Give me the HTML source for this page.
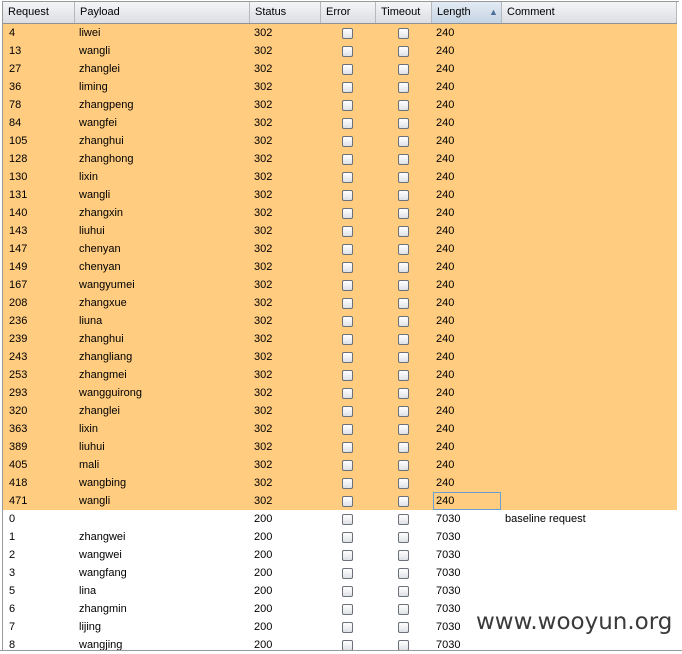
<!DOCTYPE html>
<html><head><meta charset="utf-8"><style>
body{margin:0;width:682px;height:653px;overflow:hidden;background:#fff;font-family:"Liberation Sans",sans-serif;font-size:11px;color:#000;position:relative}
.wrap{position:absolute;left:2px;top:1px;width:676px;height:648px;border-left:1px solid #999;border-top:1px solid #999;border-bottom:1px solid #999;overflow:hidden}
.hdr{position:absolute;left:0;top:0;width:674px;height:21px;background:linear-gradient(#f4f5f7,#dcdee3);border-bottom:1px solid #8e9196}
.h{position:absolute;top:0;height:21px;line-height:21px;padding-left:5px;border-right:1px solid #b5b8bd;box-sizing:border-box}
.h.sel{background:linear-gradient(#e3ebf4,#c6d4e3)}
.cb{position:absolute;top:4px;width:9px;height:9px;border:1px solid #6b7079;border-radius:2px;background:linear-gradient(#fff,#dfe2e6)}
.wm{position:absolute;left:476px;top:609px;font-size:23px;color:#3a3a3a;font-family:"DejaVu Sans","Liberation Sans",sans-serif}
.focus{position:absolute;left:430px;width:66px;height:16px;border:1px solid #6a9fd4;top:0}
.o{background:#ffcc80}
.r{position:relative;height:18px;line-height:18px}.r span{position:absolute;top:0}.a{left:6px}.b{left:76px}.s{left:251px}.l{left:433px}.m{left:502px}
</style></head><body>
<div class="wrap">
<div class="hdr">
<div class="h" style="left:0;width:72px">Request</div>
<div class="h" style="left:72px;width:175px">Payload</div>
<div class="h" style="left:247px;width:71px">Status</div>
<div class="h" style="left:318px;width:55px">Error</div>
<div class="h" style="left:373px;width:56px">Timeout</div>
<div class="h sel" style="left:429px;width:70px">Length<span style="position:absolute;left:57px;top:0;font-size:9px;color:#4a6f9c">▲</span></div>
<div class="h" style="left:499px;width:175px">Comment</div>
</div>
</div>
<div style="position:absolute;left:3px;top:24px;width:674px">
<div class="r o"><span class="a">4</span><span class="b">liwei</span><span class="s">302</span><i class="cb" style="left:339px"></i><i class="cb" style="left:395px"></i><span class="l">240</span></div>
<div class="r o"><span class="a">13</span><span class="b">wangli</span><span class="s">302</span><i class="cb" style="left:339px"></i><i class="cb" style="left:395px"></i><span class="l">240</span></div>
<div class="r o"><span class="a">27</span><span class="b">zhanglei</span><span class="s">302</span><i class="cb" style="left:339px"></i><i class="cb" style="left:395px"></i><span class="l">240</span></div>
<div class="r o"><span class="a">36</span><span class="b">liming</span><span class="s">302</span><i class="cb" style="left:339px"></i><i class="cb" style="left:395px"></i><span class="l">240</span></div>
<div class="r o"><span class="a">78</span><span class="b">zhangpeng</span><span class="s">302</span><i class="cb" style="left:339px"></i><i class="cb" style="left:395px"></i><span class="l">240</span></div>
<div class="r o"><span class="a">84</span><span class="b">wangfei</span><span class="s">302</span><i class="cb" style="left:339px"></i><i class="cb" style="left:395px"></i><span class="l">240</span></div>
<div class="r o"><span class="a">105</span><span class="b">zhanghui</span><span class="s">302</span><i class="cb" style="left:339px"></i><i class="cb" style="left:395px"></i><span class="l">240</span></div>
<div class="r o"><span class="a">128</span><span class="b">zhanghong</span><span class="s">302</span><i class="cb" style="left:339px"></i><i class="cb" style="left:395px"></i><span class="l">240</span></div>
<div class="r o"><span class="a">130</span><span class="b">lixin</span><span class="s">302</span><i class="cb" style="left:339px"></i><i class="cb" style="left:395px"></i><span class="l">240</span></div>
<div class="r o"><span class="a">131</span><span class="b">wangli</span><span class="s">302</span><i class="cb" style="left:339px"></i><i class="cb" style="left:395px"></i><span class="l">240</span></div>
<div class="r o"><span class="a">140</span><span class="b">zhangxin</span><span class="s">302</span><i class="cb" style="left:339px"></i><i class="cb" style="left:395px"></i><span class="l">240</span></div>
<div class="r o"><span class="a">143</span><span class="b">liuhui</span><span class="s">302</span><i class="cb" style="left:339px"></i><i class="cb" style="left:395px"></i><span class="l">240</span></div>
<div class="r o"><span class="a">147</span><span class="b">chenyan</span><span class="s">302</span><i class="cb" style="left:339px"></i><i class="cb" style="left:395px"></i><span class="l">240</span></div>
<div class="r o"><span class="a">149</span><span class="b">chenyan</span><span class="s">302</span><i class="cb" style="left:339px"></i><i class="cb" style="left:395px"></i><span class="l">240</span></div>
<div class="r o"><span class="a">167</span><span class="b">wangyumei</span><span class="s">302</span><i class="cb" style="left:339px"></i><i class="cb" style="left:395px"></i><span class="l">240</span></div>
<div class="r o"><span class="a">208</span><span class="b">zhangxue</span><span class="s">302</span><i class="cb" style="left:339px"></i><i class="cb" style="left:395px"></i><span class="l">240</span></div>
<div class="r o"><span class="a">236</span><span class="b">liuna</span><span class="s">302</span><i class="cb" style="left:339px"></i><i class="cb" style="left:395px"></i><span class="l">240</span></div>
<div class="r o"><span class="a">239</span><span class="b">zhanghui</span><span class="s">302</span><i class="cb" style="left:339px"></i><i class="cb" style="left:395px"></i><span class="l">240</span></div>
<div class="r o"><span class="a">243</span><span class="b">zhangliang</span><span class="s">302</span><i class="cb" style="left:339px"></i><i class="cb" style="left:395px"></i><span class="l">240</span></div>
<div class="r o"><span class="a">253</span><span class="b">zhangmei</span><span class="s">302</span><i class="cb" style="left:339px"></i><i class="cb" style="left:395px"></i><span class="l">240</span></div>
<div class="r o"><span class="a">293</span><span class="b">wangguirong</span><span class="s">302</span><i class="cb" style="left:339px"></i><i class="cb" style="left:395px"></i><span class="l">240</span></div>
<div class="r o"><span class="a">320</span><span class="b">zhanglei</span><span class="s">302</span><i class="cb" style="left:339px"></i><i class="cb" style="left:395px"></i><span class="l">240</span></div>
<div class="r o"><span class="a">363</span><span class="b">lixin</span><span class="s">302</span><i class="cb" style="left:339px"></i><i class="cb" style="left:395px"></i><span class="l">240</span></div>
<div class="r o"><span class="a">389</span><span class="b">liuhui</span><span class="s">302</span><i class="cb" style="left:339px"></i><i class="cb" style="left:395px"></i><span class="l">240</span></div>
<div class="r o"><span class="a">405</span><span class="b">mali</span><span class="s">302</span><i class="cb" style="left:339px"></i><i class="cb" style="left:395px"></i><span class="l">240</span></div>
<div class="r o"><span class="a">418</span><span class="b">wangbing</span><span class="s">302</span><i class="cb" style="left:339px"></i><i class="cb" style="left:395px"></i><span class="l">240</span></div>
<div class="r o"><span class="a">471</span><span class="b">wangli</span><span class="s">302</span><i class="cb" style="left:339px"></i><i class="cb" style="left:395px"></i><i class="focus"></i><span class="l">240</span></div>
<div class="r"><span class="a">0</span><span class="s">200</span><i class="cb" style="left:339px"></i><i class="cb" style="left:395px"></i><span class="l">7030</span><span class="m">baseline request</span></div>
<div class="r"><span class="a">1</span><span class="b">zhangwei</span><span class="s">200</span><i class="cb" style="left:339px"></i><i class="cb" style="left:395px"></i><span class="l">7030</span></div>
<div class="r"><span class="a">2</span><span class="b">wangwei</span><span class="s">200</span><i class="cb" style="left:339px"></i><i class="cb" style="left:395px"></i><span class="l">7030</span></div>
<div class="r"><span class="a">3</span><span class="b">wangfang</span><span class="s">200</span><i class="cb" style="left:339px"></i><i class="cb" style="left:395px"></i><span class="l">7030</span></div>
<div class="r"><span class="a">5</span><span class="b">lina</span><span class="s">200</span><i class="cb" style="left:339px"></i><i class="cb" style="left:395px"></i><span class="l">7030</span></div>
<div class="r"><span class="a">6</span><span class="b">zhangmin</span><span class="s">200</span><i class="cb" style="left:339px"></i><i class="cb" style="left:395px"></i><span class="l">7030</span></div>
<div class="r"><span class="a">7</span><span class="b">lijing</span><span class="s">200</span><i class="cb" style="left:339px"></i><i class="cb" style="left:395px"></i><span class="l">7030</span></div>
<div class="r"><span class="a">8</span><span class="b">wangjing</span><span class="s">200</span><i class="cb" style="left:339px"></i><i class="cb" style="left:395px"></i><span class="l">7030</span></div>
</div>
<div style="position:absolute;left:0;top:650px;width:682px;height:3px;background:#fff;border-top:1px solid #999"></div>
<div class="wm">www.wooyun.org</div>
</body></html>
